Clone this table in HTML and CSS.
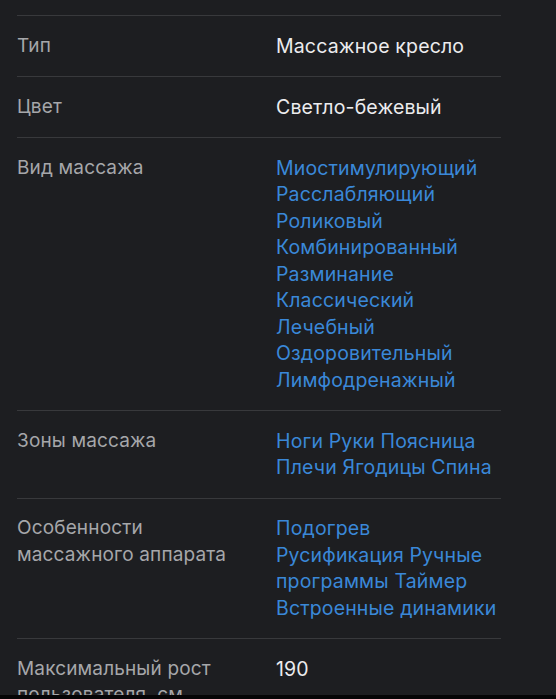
FILE: index.html
```html
<!DOCTYPE html>
<html lang="ru">
<head>
<meta charset="utf-8">
<title>Характеристики</title>
<link rel="stylesheet" href="styles.css">
</head>
<body>
<div class="specs">
  <div class="row">
    <div class="label">Тип</div>
    <div class="value">Массажное кресло</div>
  </div>
  <div class="row">
    <div class="label">Цвет</div>
    <div class="value">Светло-бежевый</div>
  </div>
  <div class="row">
    <div class="label">Вид массажа</div>
    <div class="value links">
      <a>Миостимулирующий</a>
      <a>Расслабляющий</a>
      <a>Роликовый</a>
      <a>Комбинированный</a>
      <a>Разминание</a>
      <a>Классический</a>
      <a>Лечебный</a>
      <a>Оздоровительный</a>
      <a>Лимфодренажный</a>
    </div>
  </div>
  <div class="row">
    <div class="label">Зоны массажа</div>
    <div class="value inline">
      <a>Ноги</a> <a>Руки</a> <a>Поясница</a> <a>Плечи</a> <a>Ягодицы</a> <a>Спина</a>
    </div>
  </div>
  <div class="row">
    <div class="label">Особенности массажного аппарата</div>
    <div class="value inline">
      <a>Подогрев</a><br><a>Русификация</a> <a>Ручные программы</a> <a>Таймер</a> <a>Встроенные динамики</a>
    </div>
  </div>
  <div class="row">
    <div class="label">Максимальный рост пользователя, см</div>
    <div class="value">190</div>
  </div>
</div>
<div class="bottom-edge"></div>
</body>
</html>
```

FILE: styles.css
```css
html, body {
  margin: 0;
  padding: 0;
  background: #1d1e21;
  height: 699px;
  overflow: hidden;
}
body {
  font-family: Inter, "Noto Sans", "DejaVu Sans", sans-serif;
  font-size: 19px;
  line-height: 26.5px;
}
.specs {
  padding: 15px 55px 0 17px;
}
.row {
  display: grid;
  grid-template-columns: 240px 1fr;
  column-gap: 19px;
  padding: 16.75px 0;
  border-top: 1px solid #38393c;
}
.label {
  color: #a6a7aa;
  letter-spacing: 0.15px;
}
.value {
  color: #ececee;
  font-size: 19.5px;
  letter-spacing: 0.15px;
}
.links {
  display: flex;
  flex-direction: column;
}
.value a {
  color: #3a88d8;
  text-decoration: none;
}
.inline {
  width: 228px;
}
.bottom-edge {
  position: fixed;
  left: 0;
  right: 0;
  bottom: 0;
  height: 4px;
  background: #050506;
}
```
